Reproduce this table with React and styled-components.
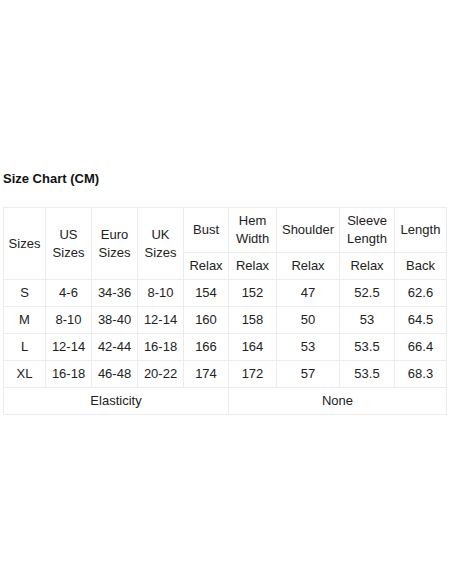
import React from 'react';
import styled, { createGlobalStyle } from 'styled-components';

const Global = createGlobalStyle`
  html, body { margin: 0; padding: 0; background: #fff; }
  body { font-family: "Liberation Sans", Arial, sans-serif; color: #222; }
`;

const Page = styled.div`
  width: 452px;
  height: 584px;
  padding: 171px 3px 0 3px;
  box-sizing: border-box;
`;

const Title = styled.h3`
  margin: 0 0 21px 0;
  font-size: 13px;
  line-height: 15px;
  font-weight: bold;
  color: #111;
`;

const Table = styled.table`
  border-collapse: collapse;
  width: 443px;
  table-layout: fixed;
  font-size: 13px;
  color: #222;
`;

const Cell = styled.td`
  border: 1px solid #ececec;
  text-align: center;
  vertical-align: middle;
  padding: 0 2px;
  height: ${p => p.h || 26}px;
  line-height: 18px;
`;

const cols = [42, 46, 46, 46, 45, 48, 63, 55, 52];

const rows = [
  ['S', '4-6', '34-36', '8-10', '154', '152', '47', '52.5', '62.6'],
  ['M', '8-10', '38-40', '12-14', '160', '158', '50', '53', '64.5'],
  ['L', '12-14', '42-44', '16-18', '166', '164', '53', '53.5', '66.4'],
  ['XL', '16-18', '46-48', '20-22', '174', '172', '57', '53.5', '68.3'],
];

export default function App() {
  return (
    <Page>
      <Global />
      <Title>Size Chart (CM)</Title>
      <Table>
        <colgroup>
          {cols.map((w, i) => <col key={i} style={{ width: w }} />)}
        </colgroup>
        <tbody>
          <tr>
            <Cell rowSpan={2}>Sizes</Cell>
            <Cell rowSpan={2}>US<br />Sizes</Cell>
            <Cell rowSpan={2}>Euro<br />Sizes</Cell>
            <Cell rowSpan={2}>UK<br />Sizes</Cell>
            <Cell h={44}>Bust</Cell>
            <Cell h={44}>Hem<br />Width</Cell>
            <Cell h={44}>Shoulder</Cell>
            <Cell h={44}>Sleeve<br />Length</Cell>
            <Cell h={44}>Length</Cell>
          </tr>
          <tr>
            <Cell>Relax</Cell>
            <Cell>Relax</Cell>
            <Cell>Relax</Cell>
            <Cell>Relax</Cell>
            <Cell>Back</Cell>
          </tr>
          {rows.map(r => (
            <tr key={r[0]}>
              {r.map((v, i) => <Cell key={i}>{v}</Cell>)}
            </tr>
          ))}
          <tr>
            <Cell colSpan={5}>Elasticity</Cell>
            <Cell colSpan={4}>None</Cell>
          </tr>
        </tbody>
      </Table>
    </Page>
  );
}
